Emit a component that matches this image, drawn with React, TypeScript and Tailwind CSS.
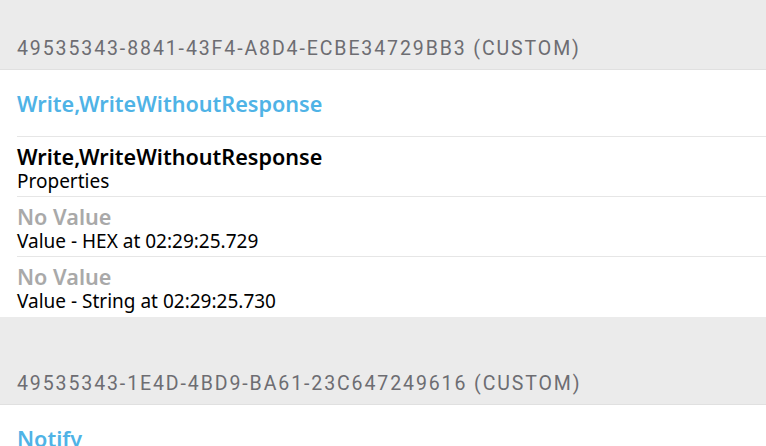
import React from 'react'

type Row = { title: string; subtitle: string; muted?: boolean }

const SECTIONS: { uuid: string; name: string; rows: Row[] }[] = [
  {
    uuid: '49535343-8841-43F4-A8D4-ECBE34729BB3 (CUSTOM)',
    name: 'Write,WriteWithoutResponse',
    rows: [
      { title: 'Write,WriteWithoutResponse', subtitle: 'Properties' },
      { title: 'No Value', subtitle: 'Value - HEX at 02:29:25.729', muted: true },
      { title: 'No Value', subtitle: 'Value - String at 02:29:25.730', muted: true },
    ],
  },
  {
    uuid: '49535343-1E4D-4BD9-BA61-23C647249616 (CUSTOM)',
    name: 'Notify',
    rows: [],
  },
]

function SectionHeader({ uuid }: { uuid: string }) {
  return (
    <div className="h-[88px] bg-[#ebebeb] border-b border-[#e0e0e0] flex items-end px-[17px] pb-[11px]">
      <span className="text-[19.5px] leading-none text-[#6d6d72] font-['Roboto',sans-serif] tracking-[1.9px] whitespace-nowrap">
        {uuid}
      </span>
    </div>
  )
}

export default function App() {
  return (
    <div className="w-[766px] h-[446px] overflow-hidden bg-white">
      <div className="mt-[-18px] font-['Noto_Sans',sans-serif]">
        {SECTIONS.map(s => (
          <div key={s.uuid}>
            <SectionHeader uuid={s.uuid} />
            <div className="bg-white pl-[17px]">
              <div className="h-[67px] pt-[22px] border-b border-[#e6e6e6]">
                <div className="text-[21.6px] font-semibold text-[#4fb3e6] leading-[24px]">{s.name}</div>
              </div>
              {s.rows.map((r, i) => (
                <div
                  key={i}
                  className={`h-[60px] pt-[8px] ${i < s.rows.length - 1 ? 'border-b border-[#e6e6e6]' : ''}`}
                >
                  <div className={`text-[21.6px] font-semibold leading-[24px] ${r.muted ? 'text-[#a9a9a9]' : 'text-black'}`}>
                    {r.title}
                  </div>
                  <div className="text-[19px] leading-[24px] text-black">{r.subtitle}</div>
                </div>
              ))}
            </div>
          </div>
        ))}
      </div>
    </div>
  )
}
